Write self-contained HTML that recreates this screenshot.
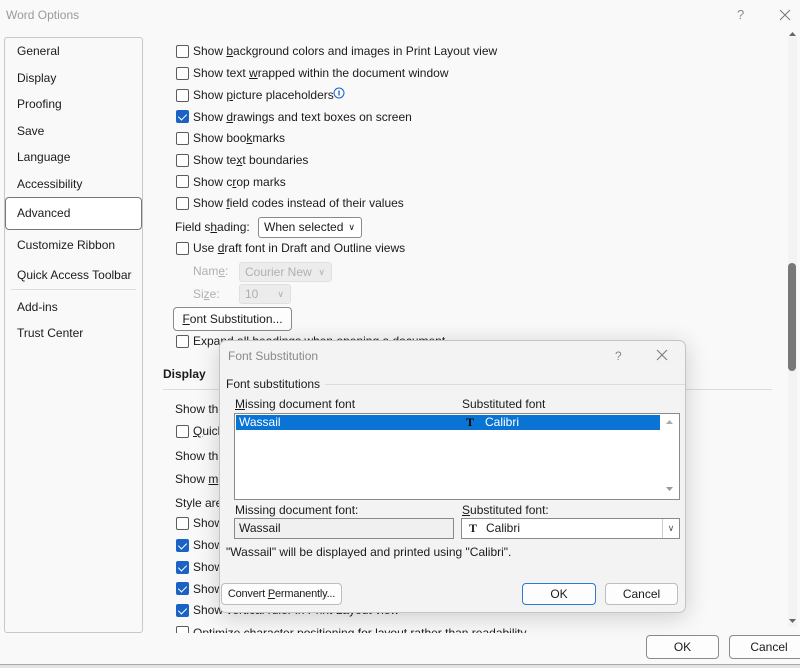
<!DOCTYPE html>
<html><head><meta charset="utf-8"><style>
*{margin:0;padding:0;box-sizing:border-box}
body{width:800px;height:668px;background:#f9f9f9;font-family:"Liberation Sans",sans-serif;font-size:12px;color:#1b1b1b;position:relative;overflow:hidden}
.a{position:absolute;white-space:nowrap;line-height:14px}
.cb{position:absolute;width:13px;height:13px;border:1px solid #5c5c5c;border-radius:2px;background:#fff}
.cb.on{background:#1a62c4;border-color:#1a62c4}
.cb.on::after{content:"";position:absolute;left:3px;top:1px;width:4px;height:7px;border:solid #fff;border-width:0 1.5px 1.5px 0;transform:rotate(45deg)}
.btn{position:absolute;border:1px solid #bdbdbd;border-radius:4px;background:#fdfdfd;text-align:center;line-height:20px;white-space:nowrap}
.sel{position:absolute;border:1px solid #8a8a8a;border-radius:3px;background:#fff;padding-left:5px;line-height:18px;white-space:nowrap}
.g{color:#b0b0b0}
u{text-decoration:underline}
</style></head><body>
<div class="a" style="left:6px;top:8px;color:#9a9a9a">Word Options</div>
<div class="a" style="left:737px;top:8px;color:#8a8a8a;font-size:13px">?</div>
<svg class="a" style="left:779px;top:9px" width="12" height="12"><path d="M1 1L11 11M11 1L1 11" stroke="#777" stroke-width="1"/></svg>

<div style="position:absolute;left:4px;top:37px;width:139px;height:596px;border:1px solid #c8c8c8;border-radius:3px;background:#f9f9f9"></div>
<div style="position:absolute;left:5px;top:197px;width:137px;height:33px;border:1px solid #777;border-radius:4px;background:#fff"></div>
<div style="position:absolute;left:11px;top:289px;width:125px;height:1px;background:#ddd"></div>
<div class="a" style="left:17px;top:44px">General</div>
<div class="a" style="left:17px;top:71px">Display</div>
<div class="a" style="left:17px;top:97px">Proofing</div>
<div class="a" style="left:17px;top:124px">Save</div>
<div class="a" style="left:17px;top:150px">Language</div>
<div class="a" style="left:17px;top:177px">Accessibility</div>
<div class="a" style="left:17px;top:206px">Advanced</div>
<div class="a" style="left:17px;top:238px">Customize Ribbon</div>
<div class="a" style="left:17px;top:268px">Quick Access Toolbar</div>
<div class="a" style="left:17px;top:300px">Add-ins</div>
<div class="a" style="left:17px;top:326px">Trust Center</div>

<div class="cb" style="left:176px;top:45px"></div><div class="a" style="left:193px;top:44px">Show <u>b</u>ackground colors and images in Print Layout view</div>
<div class="cb" style="left:176px;top:67px"></div><div class="a" style="left:193px;top:66px">Show text <u>w</u>rapped within the document window</div>
<div class="cb" style="left:176px;top:89px"></div><div class="a" style="left:193px;top:88px">Show <u>p</u>icture placeholders</div>
<svg class="a" style="left:333px;top:87px" width="12" height="12"><circle cx="6" cy="6" r="5" fill="none" stroke="#1a62c4"/><path d="M6 3.5V8.5" stroke="#1a62c4" stroke-width="1.3"/></svg>
<div class="cb on" style="left:176px;top:110px"></div><div class="a" style="left:193px;top:110px">Show <u>d</u>rawings and text boxes on screen</div>
<div class="cb" style="left:176px;top:132px"></div><div class="a" style="left:193px;top:131px">Show boo<u>k</u>marks</div>
<div class="cb" style="left:176px;top:154px"></div><div class="a" style="left:193px;top:153px">Show te<u>x</u>t boundaries</div>
<div class="cb" style="left:176px;top:175px"></div><div class="a" style="left:193px;top:175px">Show c<u>r</u>op marks</div>
<div class="cb" style="left:176px;top:197px"></div><div class="a" style="left:193px;top:196px">Show <u>f</u>ield codes instead of their values</div>
<div class="a" style="left:175px;top:220px">Field s<u>h</u>ading:</div>
<div class="sel" style="left:258px;top:217px;width:104px;height:21px">When selected <span style="position:absolute;right:6px;font-size:9px">&#8744;</span></div>
<div class="cb" style="left:176px;top:242px"></div><div class="a" style="left:193px;top:241px">Use <u>d</u>raft font in Draft and Outline views</div>
<div class="a g" style="left:193px;top:264px">Nam<u>e</u>:</div>
<div class="sel g" style="left:239px;top:262px;width:93px;height:20px;background:#ececec;border-color:#e0e0e0">Courier New <span style="position:absolute;right:6px;font-size:9px">&#8744;</span></div>
<div class="a g" style="left:193px;top:287px">Si<u>z</u>e:</div>
<div class="sel g" style="left:239px;top:284px;width:52px;height:20px;background:#ececec;border-color:#e0e0e0">10 <span style="position:absolute;right:6px;font-size:9px">&#8744;</span></div>
<div class="btn" style="left:173px;top:307px;width:119px;height:24px;line-height:22px;border-color:#8a8a8a"><u>F</u>ont Substitution...</div>
<div class="cb" style="left:176px;top:335px"></div><div class="a" style="left:193px;top:334px">Expand all headings when opening a document</div>
<div class="a" style="left:163px;top:367px;font-weight:bold">Display</div>
<div style="position:absolute;left:163px;top:389px;width:609px;height:1px;background:#dcdcdc"></div>
<div class="a" style="left:175px;top:402px">Show this number of Recent Documents:</div>
<div class="cb" style="left:176px;top:425px"></div><div class="a" style="left:193px;top:424px"><u>Q</u>uickly access this number</div>
<div class="a" style="left:175px;top:449px">Show this number of unpinned Recent Folders:</div>
<div class="a" style="left:175px;top:472px">Show <u>m</u>easurements in units of:</div>
<div class="a" style="left:175px;top:496px">Style are<u>a</u> pane width</div>
<div class="cb" style="left:176px;top:517px"></div><div class="a" style="left:193px;top:516px">Show pixels</div>
<div class="cb on" style="left:176px;top:539px"></div><div class="a" style="left:193px;top:538px">Show</div>
<div class="cb on" style="left:176px;top:561px"></div><div class="a" style="left:193px;top:560px">Show</div>
<div class="cb on" style="left:176px;top:582px"></div><div class="a" style="left:193px;top:582px">Show</div>
<div class="cb on" style="left:176px;top:604px"></div><div class="a" style="left:193px;top:603px">Show vertical ruler in Print Layout view</div>
<div style="position:absolute;left:148px;top:626px;width:640px;height:7px;overflow:hidden"><div class="cb" style="left:28px;top:0"></div><div class="a" style="left:45px;top:0">Optimize character positioning for layout rather than readability</div></div>

<div style="position:absolute;left:788px;top:37px;width:9px;height:590px;background:#f3f3f3"></div>
<svg class="a" style="left:788px;top:30px" width="9" height="8"><path d="M1 6L4.5 2L8 6Z" fill="#666"/></svg>
<div style="position:absolute;left:788px;top:263px;width:8px;height:108px;background:#777;border-radius:4px"></div>
<svg class="a" style="left:788px;top:617px" width="9" height="8"><path d="M1 2L4.5 6L8 2Z" fill="#666"/></svg>
<div class="btn" style="left:646px;top:635px;width:73px;height:24px;line-height:22px;border-color:#8a8a8a">OK</div>
<div class="btn" style="left:729px;top:635px;width:80px;height:24px;line-height:22px;border-color:#8a8a8a">Cancel</div>
<div style="position:absolute;left:0;top:664px;width:800px;height:4px;background:#e4e4e4;border-top:1px solid #aaa"></div>

<!-- dialog -->
<div style="position:absolute;left:219px;top:340px;width:467px;height:273px;background:#f3f3f3;border:1px solid #c4c4c4;border-radius:7px;box-shadow:0 4px 24px rgba(0,0,0,.18)"></div>
<div class="a" style="left:228px;top:349px;color:#8a8a8a">Font Substitution</div>
<div class="a" style="left:615px;top:349px;color:#8a8a8a">?</div>
<svg class="a" style="left:656px;top:349px" width="12" height="12"><path d="M1 1L11 11M11 1L1 11" stroke="#777"/></svg>
<div class="a" style="left:226px;top:377px">Font substitutions</div>
<div style="position:absolute;left:325px;top:384px;width:360px;height:1px;background:#dcdcdc"></div>
<div class="a" style="left:235px;top:397px"><u>M</u>issing document font</div>
<div class="a" style="left:462px;top:397px">Substituted font</div>
<div style="position:absolute;left:234px;top:413px;width:446px;height:87px;background:#fff;border:1px solid #8a8a8a"></div>
<div style="position:absolute;left:236px;top:415px;width:424px;height:15px;background:#0a74d4"></div>
<div class="a" style="left:239px;top:415px;color:#fff">Wassail</div>
<div class="a" style="left:466px;top:415px;color:#000;font-family:'Liberation Serif',serif;font-weight:bold">&#1058;</div>
<div class="a" style="left:485px;top:415px;color:#fff">Calibri</div>
<svg class="a" style="left:665px;top:418px" width="9" height="8"><path d="M1 6L4.5 2L8 6Z" fill="#aaa"/></svg>
<svg class="a" style="left:665px;top:485px" width="9" height="8"><path d="M1 2L4.5 6L8 2Z" fill="#999"/></svg>
<div class="a" style="left:235px;top:503px">Missing document font:</div>
<div class="a" style="left:462px;top:503px"><u>S</u>ubstituted font:</div>
<div style="position:absolute;left:234px;top:518px;width:220px;height:21px;background:#f0f0f0;border:1px solid #8a8a8a;padding-left:4px;line-height:19px">Wassail</div>
<div style="position:absolute;left:461px;top:518px;width:219px;height:21px;background:#fff;border:1px solid #8a8a8a;line-height:19px"><span style="position:absolute;left:7px;font-family:'Liberation Serif',serif;font-weight:bold">&#1058;</span><span style="position:absolute;left:24px">Calibri</span><span style="position:absolute;right:0;top:0;width:17px;height:19px;border-left:1px solid #ccc;text-align:center;font-size:9px;color:#555">&#8744;</span></div>
<div class="a" style="left:226px;top:545px">"Wassail" will be displayed and printed using "Calibri".</div>
<div class="btn" style="left:221px;top:583px;width:121px;height:22px;font-size:11px;letter-spacing:-0.2px">Convert <u>P</u>ermanently...</div>
<div class="btn" style="left:522px;top:583px;width:74px;height:22px;border:1.5px solid #2a7bd0">OK</div>
<div class="btn" style="left:605px;top:583px;width:73px;height:22px">Cancel</div>
</body></html>
